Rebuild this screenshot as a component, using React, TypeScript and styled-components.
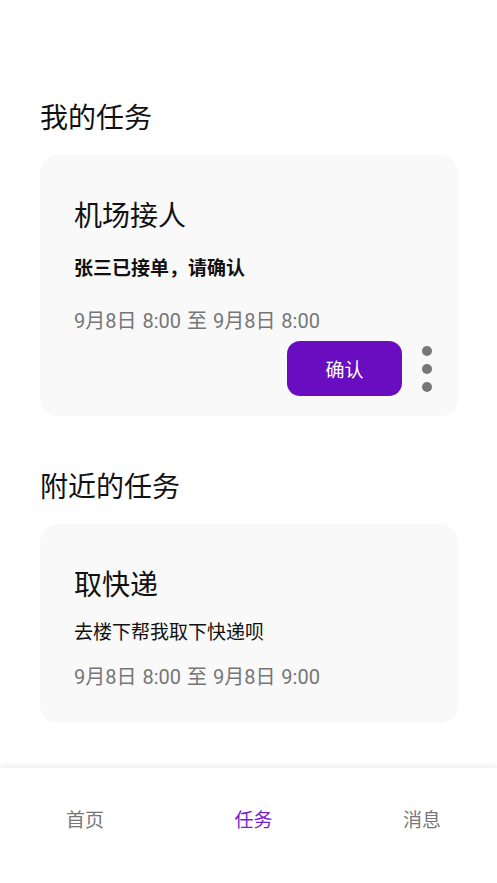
import React from 'react'
import styled, { createGlobalStyle } from 'styled-components'

const GlobalStyle = createGlobalStyle`
  html, body {
    margin: 0;
    padding: 0;
    background: #ffffff;
  }
  body {
    font-family: Roboto, "Noto Sans CJK SC", sans-serif;
    color: #111111;
  }
`

type Task = {
  title: string
  note: string
  strong?: boolean
  time: string
  action?: string
}

const myTasks: Task[] = [
  {
    title: '机场接人',
    note: '张三已接单，请确认',
    strong: true,
    time: '9月8日 8:00 至 9月8日 8:00',
    action: '确认',
  },
]

const nearbyTasks: Task[] = [
  {
    title: '取快递',
    note: '去楼下帮我取下快递呗',
    time: '9月8日 8:00 至 9月8日 9:00',
  },
]

const tabs = ['首页', '任务', '消息']

const TaskCard = ({ task }: { task: Task }) => (
  <Card $compact={!task.action}>
    <CardTitle>{task.title}</CardTitle>
    <Note $strong={task.strong}>{task.note}</Note>
    <Time $compact={!task.action}>{task.time}</Time>
    {task.action && (
      <Actions>
        <ConfirmButton>{task.action}</ConfirmButton>
        <MoreButton aria-label='更多'>
          <Dot />
          <Dot />
          <Dot />
        </MoreButton>
      </Actions>
    )}
  </Card>
)

const App = () => {
  return (
    <Screen>
      <GlobalStyle />
      <Content>
        <Section>
          <SectionTitle>我的任务</SectionTitle>
          {myTasks.map((t) => (
            <TaskCard key={t.title} task={t} />
          ))}
        </Section>
        <Section>
          <SectionTitle>附近的任务</SectionTitle>
          {nearbyTasks.map((t) => (
            <TaskCard key={t.title} task={t} />
          ))}
        </Section>
      </Content>
      <TabBar>
        {tabs.map((tab) => (
          <Tab key={tab} $active={tab === '任务'}>
            {tab}
          </Tab>
        ))}
      </TabBar>
    </Screen>
  )
}

export default App

const Screen = styled.div`
  display: flex;
  flex-direction: column;
  height: 100vh;
  overflow: hidden;
`

const Content = styled.main`
  flex: 1;
  display: flex;
  flex-direction: column;
  gap: 52px;
  padding: 99px 39px 0 40px;
`

const Section = styled.section`
  display: flex;
  flex-direction: column;
  gap: 16px;
`

const SectionTitle = styled.h2`
  margin: 0;
  font-size: 28px;
  line-height: 40px;
  font-weight: 400;
  color: #111111;
`

const Card = styled.div<{ $compact?: boolean }>`
  display: flex;
  flex-direction: column;
  background: #f9f9f9;
  border-radius: 18px;
  padding: 42px 26px ${({ $compact }) => ($compact ? '32px' : '20px')} 34px;
`

const CardTitle = styled.h3`
  margin: 0;
  font-size: 28px;
  line-height: 40px;
  font-weight: 400;
  color: #111111;
`

const Note = styled.p<{ $strong?: boolean }>`
  margin: ${({ $strong }) => ($strong ? '18px' : '13px')} 0 0;
  font-size: 19px;
  line-height: 28px;
  font-weight: ${({ $strong }) => ($strong ? 700 : 400)};
  color: #111111;
`

const Time = styled.p<{ $compact?: boolean }>`
  margin: ${({ $compact }) => ($compact ? '16px' : '24px')} 0 0;
  font-size: 20px;
  line-height: 28px;
  word-spacing: 1px;
  color: #767676;
`

const Actions = styled.div`
  display: flex;
  justify-content: flex-end;
  align-items: center;
  gap: 20px;
  margin-top: 6px;
`

const ConfirmButton = styled.button`
  width: 115px;
  height: 55px;
  border: none;
  border-radius: 13px;
  background: #6a0cc0;
  color: #ffffff;
  font-family: inherit;
  font-size: 19px;
  cursor: pointer;
`

const MoreButton = styled.button`
  display: flex;
  flex-direction: column;
  gap: 8px;
  padding: 0;
  border: none;
  background: none;
  cursor: pointer;
`

const Dot = styled.span`
  display: block;
  width: 10px;
  height: 10px;
  border-radius: 50%;
  background: #777777;
`

const TabBar = styled.nav`
  flex: 0 0 115px;
  display: flex;
  justify-content: space-between;
  align-items: flex-start;
  padding: 39px 56px 0 66px;
  box-sizing: border-box;
  background: #ffffff;
  box-shadow: 0 -2px 6px rgba(0, 0, 0, 0.08);
`

const Tab = styled.a<{ $active?: boolean }>`
  font-size: 19px;
  line-height: 28px;
  color: ${({ $active }) => ($active ? '#7a1fcc' : '#777777')};
  text-decoration: none;
  cursor: pointer;
`
